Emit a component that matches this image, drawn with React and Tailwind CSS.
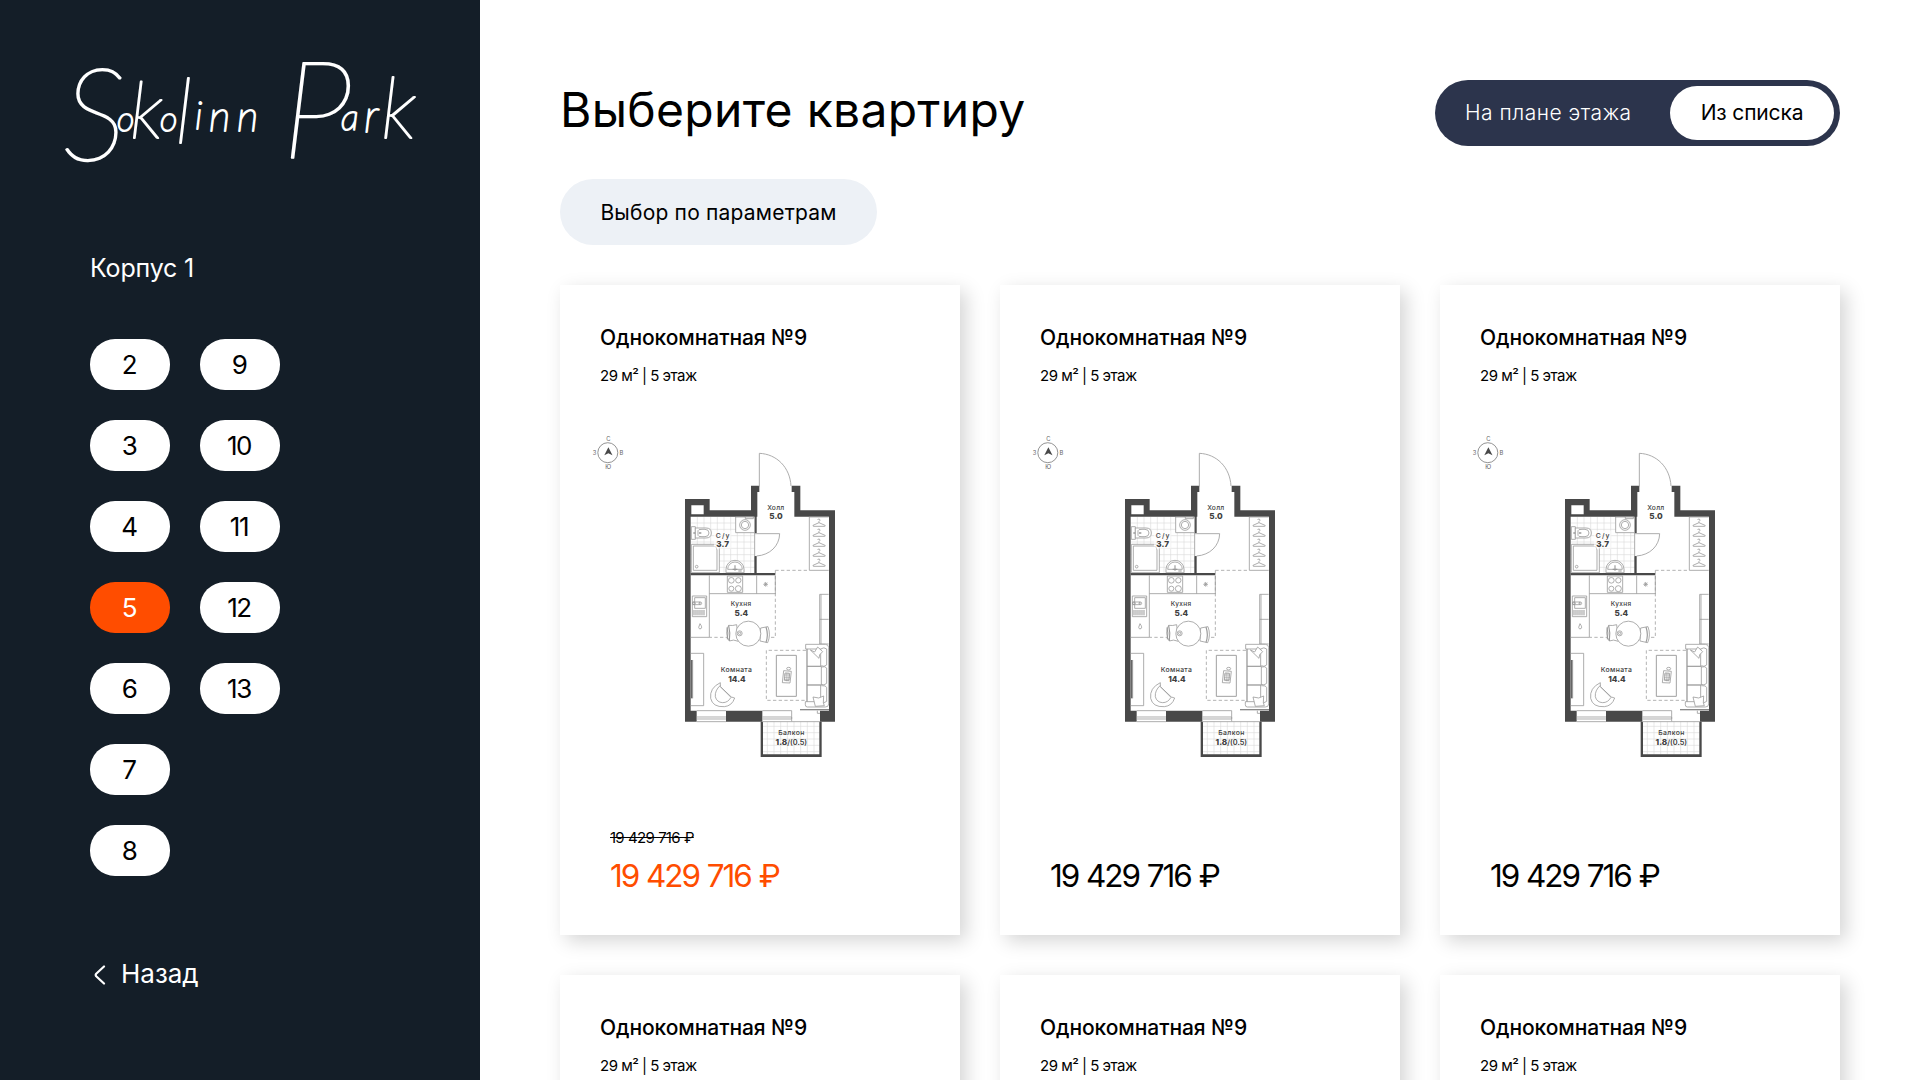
const floorColumns = [
  [2, 3, 4, 5, 6, 7, 8],
  [9, 10, 11, 12, 13],
];
const activeFloor = 5;

const apartments = [
  { id: 1, discounted: true },
  { id: 2 },
  { id: 3 },
  { id: 4 },
  { id: 5 },
  { id: 6 },
];

const logoLetters = [
  { ch: 'S', x: 63, y: 160, size: 128 },
  { ch: 'o', x: 117, y: 131, size: 34 },
  { ch: 'k', x: 130, y: 138, size: 78 },
  { ch: 'o', x: 160, y: 131, size: 34 },
  { ch: 'l', x: 175, y: 143, size: 90 },
  { ch: 'i', x: 195, y: 129, size: 38 },
  { ch: 'n', x: 209, y: 131, size: 42 },
  { ch: 'n', x: 237, y: 131, size: 42 },
  { ch: 'P', x: 282, y: 158, size: 134 },
  { ch: 'a', x: 341, y: 130, size: 36 },
  { ch: 'r', x: 364, y: 132, size: 46 },
  { ch: 'k', x: 381, y: 138, size: 84 },
];

function Logo() {
  return (
    <svg
      viewBox="40 40 400 140"
      className="h-[140px] w-[400px] shrink-0 overflow-visible fill-white stroke-white font-['Lato',sans-serif] font-thin italic"
      strokeWidth="1.9"
      strokeLinejoin="round"
    >
      <text>
        {logoLetters.map((l, i) => (
          <tspan key={i} x={l.x} y={l.y} fontSize={l.size}>
            {l.ch}
          </tspan>
        ))}
      </text>
    </svg>
  );
}

function FloorButton({ floor }) {
  const active = floor === activeFloor;
  return (
    <button
      className={`flex h-[51px] w-20 items-center justify-center rounded-[25px] pr-0.5 text-[26px] leading-none tracking-[-1.4px] ${
        active ? 'bg-[#ff4d00] text-white' : 'bg-white text-black'
      }`}
    >
      {floor}
    </button>
  );
}

function Sidebar() {
  return (
    <aside className="flex h-full w-[480px] shrink-0 flex-col bg-[#141e28] text-white">
      <div className="pt-10 pl-10">
        <Logo />
      </div>
      <div className="flex flex-col px-[90px] pt-[73px]">
        <h2 className="text-[25px] leading-[30px] tracking-[-0.2px]">Корпус 1</h2>
        <div className="mt-14 flex gap-[30px]">
          {floorColumns.map((col, i) => (
            <div key={i} className="flex flex-col gap-[30px]">
              {col.map((f) => (
                <FloorButton key={f} floor={f} />
              ))}
            </div>
          ))}
        </div>
        <button className="mt-[82px] flex items-center gap-[15px] pl-1 text-[26px] leading-8">
          <svg viewBox="0 0 12 20" className="mt-px h-5 w-3 fill-none stroke-white" strokeWidth="2.2" strokeLinecap="round" strokeLinejoin="round">
            <path d="M10 1.5 2.2 8.8Q1.2 10 2.2 11.2L10 18.5" />
          </svg>
          Назад
        </button>
      </div>
    </aside>
  );
}

function Compass() {
  return (
    <g>
      <g fill="none" stroke="#777" strokeWidth="0.8">
        <circle cx="607.8" cy="452.7" r="10" />
      </g>
      <path d="M608.4 447.3 612.5 455.2 608.4 453.2 604.3 455.2Z" fill="#484848" />
      <g fill="#666" fontSize="5.8" textAnchor="middle">
        <text x="608.3" y="441.4">С</text>
        <text x="608.3" y="469.2">Ю</text>
        <text x="594.6" y="455.2">З</text>
        <text x="621.3" y="455.2">В</text>
      </g>
    </g>
  );
}

const hangers = [250, 280, 310, 340, 370];
const bathGridX = [82, 102, 122, 142, 162, 182, 202, 222, 242];
const bathGridY = [249, 268, 287, 306, 325, 344, 363, 382];
const balconyX = [292, 312, 332, 352, 372, 392, 412, 432];
const balconyY = [859, 878, 897, 916, 935];

function FloorPlan() {
  return (
    <svg
      viewBox="590 430 260 340"
      className="h-[340px] w-[260px] font-['Inter',sans-serif]"
      fill="none"
    >
      <Compass />
      <g transform="translate(670 440) scale(0.33333)">
        {/* tiles */}
        <g stroke="#dadada" strokeWidth="1.8">
          {bathGridX.map((x) => (
            <path key={x} d={`M${x} 231V399`} />
          ))}
          {bathGridY.map((y) => (
            <path key={y} d={`M62 ${y}H254`} />
          ))}
          {balconyX.map((x) => (
            <path key={x} d={`M${x} 845V943`} />
          ))}
          {balconyY.map((y) => (
            <path key={y} d={`M278 ${y}H449`} />
          ))}
        </g>
        {/* walls */}
        <g fill="#484848">
          <path
            fillRule="evenodd"
            d="M45 177H119V211H243V137H268V156H262V230H62V812H80V845H45ZM64 196V223H101V196Z"
          />
          <path d="M365 137H391V211H495V845H450V812H477V230H373V156H365Z" />
          <path d="M168 812H277V845H168Z" />
          <path d="M253 228H260V279H253ZM253 348H260V400H253ZM62 399H316V406H62Z" />
          <path d="M272 845H279V943H448V845H455V951H272Z" />
        </g>
        {/* doors and windows */}
        <g stroke="#a0a0a0" strokeWidth="2.6">
          <path d="M268 140V40C320 42 360 82 363 138" />
          <path d="M254 281H329C328 318 300 345 260 348M254 279V350" />
          <path d="M80 831H168M80 837H168M277 831H365M277 837H365V812H277M80 845H168M80 812H168M365 845H450" />
          <path d="M277 845H365V831M442 812V820H450" />
        </g>
        <path d="M390 809H477" stroke="#888" strokeWidth="4" />
        {/* zoning */}
        <g stroke="#a8a8a8" strokeWidth="2.6" strokeDasharray="10 7">
          <path d="M316 391H418M316 391V592H118" />
          <path d="M408 631H289V781H408" />
        </g>
        {/* bathroom */}
        <g stroke="#999" strokeWidth="2.4" fill="#fff">
          <path d="M197 231H254V278H197Z" />
          <circle cx="225" cy="255" r="16" />
          <circle cx="225" cy="255" r="11" />
          <path d="M226 231h24v5h-24Z" />
          <path d="M64 260H76V298H64Z" />
          <path d="M76 264H108Q124 264 124 279 124 294 108 294H76Z" />
          <path d="M84 272Q84 268 96 268H105Q117 268 117 279 117 290 105 290H96Q84 290 84 286Z" />
          <path d="M76 279H70M87 279H94" strokeWidth="4" />
          <path d="M64 313H148V398H64Z" />
          <path d="M70 318H130Q141 318 141 330V391H70Z" />
          <circle cx="80" cy="380" r="4" />
          <path d="M168 398V388A27 27 0 0 1 222 388V398Z" />
          <path d="M173 388A22 22 0 0 1 217 388Z" />
          <path d="M195 376V392M188 388H202" strokeWidth="3.4" />
          <path d="M205 393H215" strokeWidth="3" />
        </g>
        <path d="M132 272H184V326H132Z" fill="#fff" fillOpacity="0.6" />
        {/* wardrobe */}
        <g stroke="#999" strokeWidth="2.4">
          <path d="M476 231H418V391H476" />
          {hangers.map((y) => (
            <g key={y}>
              <path d={`M447 ${y - 2} 429 ${y + 6}Q428 ${y + 9} 432 ${y + 9}H464Q468 ${y + 8} 465 ${y + 6}Z`} />
              <path d={`M447 ${y - 2}V${y - 6}Q453 ${y - 9} 448 ${y - 13}Q444 ${y - 14} 443 ${y - 10}`} />
            </g>
          ))}
          <path d="M476 463H449V612H476M449 538H476M453 463V612" />
        </g>
        {/* kitchen */}
        <g stroke="#999" strokeWidth="2.4">
          <path d="M118 406V592H62M118 461H316V406M260 406V461" />
          <path d="M172 408H218V457H172Z" />
          <circle cx="184" cy="421" r="8.5" />
          <circle cx="205" cy="421" r="8" />
          <circle cx="184" cy="446" r="7.5" />
          <circle cx="205" cy="446" r="9" />
          <path d="M280 433H294M287 426V440M282 428 292 438M292 428 282 438" />
          <path d="M67 468H110V530H67Z" />
          <path d="M74 473H106V505H74Z" />
          <path d="M68 486H90V494H68Z" />
          <circle cx="91" cy="490" r="4" />
          <circle cx="72" cy="490" r="4" />
          <path d="M72 510V526M78 510V526M84 510V526M90 510V526M96 510V526M102 510V526" strokeWidth="3" />
          <path d="M90 551Q98 562 93 566 87 569 86 562Z" />
        </g>
        {/* dining table */}
        <g stroke="#999" strokeWidth="2.4" fill="#fff">
          <path d="M176 556Q188 558 200 554L205 604Q190 597 178 603Q163 580 176 556Z" />
          <path d="M176 556Q182 580 178 603M171 562Q176 580 172 598" strokeWidth="3.4" />
          <path d="M272 564 294 560Q303 585 293 608L270 603Z" />
          <path d="M288 561Q296 585 288 607" strokeWidth="3.4" />
          <circle cx="235" cy="581" r="37.5" />
          <circle cx="209" cy="580" r="7.5" />
          <circle cx="209" cy="580" r="3.5" />
        </g>
        {/* living room */}
        <g stroke="#999" strokeWidth="2.4">
          <path d="M62 640H101V797H62M68 660V775" />
          <path d="M65 660V775" stroke="#666" strokeWidth="4" />
          <path d="M319 646H379V769H319Z" strokeWidth="2.8" />
          <path d="M341 692 364 694 360 729 337 728ZM345 699 359 700 357 722 343 721Z" />
          <path d="M349 698V724M354 698V724M342 705H360M342 712H360M342 718H359" strokeWidth="1.6" />
          <ellipse cx="356" cy="686" rx="6" ry="4" />
          <path d="M407 613H466Q476 613 476 623V792Q476 801 466 801H412Q406 801 406 794V785H411V627H407Z" fill="#fff" />
          <path d="M411 627H452V679H411ZM411 679H454V735H411ZM411 735H452V785H411Z" />
          <path d="M452 627Q462 620 470 627V675Q462 682 454 677M454 681Q466 678 470 684V730Q462 738 454 733M454 737Q468 736 470 742V784Q462 792 452 785" />
          <path d="M421 630 434 636 443 621 458 635 449 644 447 655Z" fill="#fff" />
          <path d="M429 771 446 774 461 768 460 788 463 797 436 799Z" fill="#fff" />
          <path d="M151 728Q118 744 122 775 128 802 163 800 186 798 194 774L184 771 151 740Z" fill="#fff" />
          <path d="M151 736Q134 752 136 770 140 787 158 788 174 788 183 772L151 740" />
        </g>
        {/* labels */}
        <g fill="#404040" textAnchor="middle" fontWeight="500">
          <text x="317" y="209" fontSize="20" textLength="51">Холл</text>
          <text x="158" y="293" fontSize="20.5" textLength="41">С/у</text>
          <text x="213" y="497" fontSize="19.5" textLength="61">Кухня</text>
          <text x="199" y="696" fontSize="20.5" textLength="93">Комната</text>
          <text x="364" y="884" fontSize="20.5" textLength="78">Балкон</text>
        </g>
        <g fill="#404040" textAnchor="middle" fontSize="24.5" fontWeight="800">
          <text x="318" y="238">5.0</text>
          <text x="158" y="321">3.7</text>
          <text x="214" y="527">5.4</text>
          <text x="201" y="725">14.4</text>
          <text x="364" y="914">
            1.8<tspan fontSize="22" fontWeight="600">/(0.5)</tspan>
          </text>
        </g>
      </g>
    </svg>
  );
}

function ApartmentCard({ discounted }) {
  return (
    <article className="flex h-[650px] flex-col bg-white px-10 pt-[38px] pb-[39px] shadow-[6px_6px_18px_rgba(0,0,0,0.17)]">
      <h3 className="text-[21px] leading-[30px] font-medium tracking-[-0.07px]">Однокомнатная №9</h3>
      <p className="mt-[13px] text-[15px] leading-5 tracking-[-0.5px]">29 м² | 5 этаж</p>
      <div className="mt-11 -ml-[10px] flex">
        <FloorPlan />
      </div>
      <div className="mt-auto flex flex-col pl-2.5">
        {discounted && (
          <span className="text-[15px] leading-5 tracking-[-0.75px] [word-spacing:0.7px] line-through">19 429 716 ₽</span>
        )}
        <span
          className={`mt-2 text-[31.5px] leading-10 tracking-[-2.1px] [word-spacing:1.2px] ${discounted ? 'text-[#ff4d00]' : 'text-black'}`}
        >
          19 429 716 ₽
        </span>
      </div>
    </article>
  );
}

function ViewToggle() {
  return (
    <div className="flex h-[66px] w-[405px] items-center justify-between rounded-[33px] bg-[#2c344c] p-1.5 pl-[30px] text-[21px]">
      <button className="font-light tracking-[0.5px] text-white">На плане этажа</button>
      <button className="h-[54px] w-[164px] rounded-[27px] bg-white tracking-[-0.15px] text-black">
        Из списка
      </button>
    </div>
  );
}

export default function App() {
  return (
    <div className="flex h-screen w-screen overflow-hidden bg-white font-['Inter',sans-serif] text-black">
      <Sidebar />
      <main className="flex flex-1 flex-col pt-20 pr-20 pl-20">
        <header className="flex items-start justify-between">
          <h1 className="text-[48px] leading-[60px] tracking-[0.3px]">Выберите квартиру</h1>
          <ViewToggle />
        </header>
        <button className="mt-[33px] h-[66px] w-[317px] shrink-0 self-start rounded-[33px] bg-[#edf1f6] pt-px text-[21px] tracking-[0.2px]">
          Выбор по параметрам
        </button>
        <section className="mt-10 grid grid-cols-[repeat(3,400px)] gap-10">
          {apartments.map((a) => (
            <ApartmentCard key={a.id} discounted={a.discounted} />
          ))}
        </section>
      </main>
    </div>
  );
}
